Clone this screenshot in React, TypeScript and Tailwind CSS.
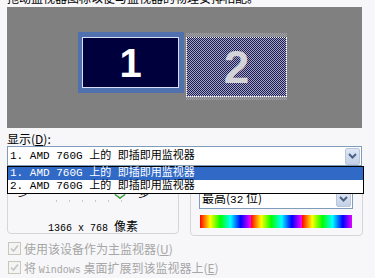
const cjk = "font-['Noto_Sans_CJK_SC',sans-serif]";
const mono = "font-['Liberation_Mono','Noto_Sans_CJK_SC',monospace]";

function DropButton() {
  return (
    <div className="flex h-full w-[15px] items-center justify-center rounded-[2px] border border-[#b9c6dc] bg-[linear-gradient(#dfe7f5,#c3d0e6)]">
      <svg width="9" height="6" viewBox="0 0 9 6">
        <path d="M1 1 L4.5 4.5 L8 1" fill="none" stroke="#4d6185" strokeWidth="2" />
      </svg>
    </div>
  );
}

function SliderThumb() {
  return (
    <svg width="12" height="14" viewBox="0 0 12 14">
      <path d="M0.5 0.5 H11.5 V9 L6 13.5 L0.5 9 Z" fill="#eceeef" stroke="#9aa3a8" />
      <path d="M1 9.5 L6 13 L11 9.5" fill="none" stroke="#3fa23a" strokeWidth="1.5" />
    </svg>
  );
}

function Check({ label }: { label: React.ReactNode }) {
  return (
    <div className="flex h-[19px] items-start gap-[3px] pl-[8px]">
      <div className="flex h-[13px] w-[13px] items-center justify-center border border-[#c9c7ba] bg-[#f4f4f4]">
        <svg width="9" height="9" viewBox="0 0 9 9">
          <path d="M1 4.5 L3.5 7 L8 1.5" fill="none" stroke="#c4c4c4" strokeWidth="1.6" />
        </svg>
      </div>
      <span className="text-[12px] leading-[14px] text-[#a6a6a6]">{label}</span>
    </div>
  );
}

export default function App() {
  return (
    <div className={`relative h-[278px] w-[375px] overflow-hidden bg-[#f7f7f9] text-black ${cjk}`}>
      {/* caption cut off at the top */}
      <div className="h-[7px] overflow-hidden pl-[7px]">
        <p className="-mt-[8px] whitespace-nowrap text-[12px] leading-[12px]">
          拖动监视器图标以便与监视器的物理安排相配。
        </p>
      </div>

      {/* monitor arrangement */}
      <div className="relative ml-[7px] h-[121px] w-[355px] bg-[#808080]">
        <div className="absolute left-[71px] top-[25px] h-[61px] w-[106px] bg-[#5070ae] pb-[5px] pl-[4px] pr-[5px] pt-[5px]">
          <div className="flex h-full w-full items-center justify-center border border-[#d8e0f8] bg-[#00003c]">
            <span className="font-['Liberation_Sans',sans-serif] text-[40px] font-bold leading-none text-white">1</span>
          </div>
        </div>
        <div className="absolute left-[179px] top-[26px] h-[67px] w-[101px] bg-[repeating-conic-gradient(#808080_0_25%,#a2a2ac_0_50%)] bg-[length:2px_2px] pb-[3px] pt-[4px]">
          <div className="flex h-full w-full items-center justify-center border border-dotted border-white bg-[repeating-conic-gradient(#1c1c5c_0_25%,#a4a4bc_0_50%)] bg-[length:2px_2px]">
            <span className="font-['Liberation_Sans',sans-serif] text-[46px] font-bold leading-none text-[#d4d4d8]">2</span>
          </div>
        </div>
      </div>

      <div className="ml-[7px] mt-[3px] h-[15px] text-[12px] leading-[15px]">
        显示(<span className="underline">D</span>):
      </div>

      {/* display select with open list */}
      <div className="relative z-10 ml-[7px] h-[20px] w-[355px]">
        <div className="flex h-full items-center border border-[#7f9db9] bg-white pl-[2px] pr-[1px]">
          <span className={`flex-1 whitespace-pre text-[11px] leading-[14px] ${mono}`}>1. AMD 760G 上的 即插即用监视器</span>
          <div className="h-[17px]">
            <DropButton />
          </div>
        </div>
        <div className={`absolute left-0 top-[20px] w-[357px] border border-black bg-white text-[11px] leading-[13px] ${mono}`}>
          <div className="whitespace-pre bg-[#3169c6] pl-[2px] text-white">1. AMD 760G 上的 即插即用监视器</div>
          <div className="whitespace-pre pl-[2px]">2. AMD 760G 上的 即插即用监视器</div>
        </div>
      </div>

      {/* group boxes */}
      <div className="ml-[7px] mt-[4px] flex gap-[11px]">
        <div className="h-[64px] w-[172px] rounded-[4px] border border-[#d6d6d6] pt-[15px]">
          <div className="flex items-start text-[12px] leading-[12px]">
            <span className="ml-[10px]">少</span>
            <div className="relative ml-[26px] h-[22px] w-[72px]">
              <div className="absolute left-0 top-[4px] h-[3px] w-[70px] border border-[#b8b8b8] bg-[#f0f0f0]" />
              <div className="absolute left-[58px] top-[-1px]">
                <SliderThumb />
              </div>
              <div className="absolute left-0 top-[14px] flex w-[66px] justify-between">
                {[0, 1, 2, 3, 4, 5].map((i) => (
                  <div key={i} className="h-[2px] w-[1px] bg-[#c8c8c8]" />
                ))}
              </div>
            </div>
            <span className="ml-[10px]">多</span>
          </div>
          <div className="mt-[11px] text-center text-[12px] leading-[14px]">
            <span className={`text-[10px] ${mono}`}>1366 x 768 </span>像素
          </div>
        </div>
        <div className="h-[66px] w-[173px] rounded-[4px] border border-[#d6d6d6] pl-[8px] pt-[18px]">
          <div className="flex h-[20px] w-[154px] items-center border border-[#7f9db9] bg-white pl-[2px] pr-[1px]">
            <span className="flex-1 text-[12px] leading-[14px]">
              最高(<span className="font-['Liberation_Mono',monospace] text-[11px]">32</span> 位)
            </span>
            <div className="h-[16px]">
              <DropButton />
            </div>
          </div>
          <div className="ml-[1px] mt-[6px] h-[13px] w-[152px] bg-[linear-gradient(to_right,#ff0000,#ffff00,#00ff00,#00ffff,#0000ff,#ff00ff)] bg-[length:51px_100%] bg-repeat-x" />
        </div>
      </div>

      {/* checkboxes */}
      <div className="mt-[6px]">
        <Check
          label={
            <>
              使用该设备作为主监视器(<span className="underline">U</span>)
            </>
          }
        />
        <Check
          label={
            <>
              将 <span className={`text-[10px] ${mono}`}>Windows</span> 桌面扩展到该监视器上(<span className="underline">E</span>)
            </>
          }
        />
      </div>
    </div>
  );
}
